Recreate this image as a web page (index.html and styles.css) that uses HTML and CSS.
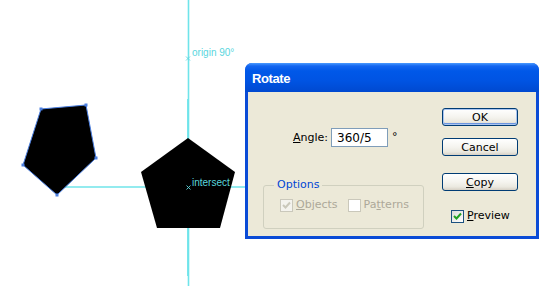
FILE: index.html
```html
<!DOCTYPE html>
<html lang="en">
<head>
  <meta charset="UTF-8">
  <meta name="viewport" content="width=device-width, initial-scale=1.0">
  <title>Rotate</title>
  <link rel="stylesheet" href="styles.css">
</head>
<body>

  <!-- artboard: guides and the two pentagons -->
  <svg class="artboard" width="556" height="286" viewBox="0 0 556 286">
    <line class="guide" x1="188.5" y1="0" x2="188.5" y2="286" stroke-width="1.6"/>
    <line class="guide" x1="187.6" y1="99" x2="187.6" y2="276" stroke-width="1"/>
    <line class="guide" x1="54" y1="187" x2="250" y2="187" stroke-width="1.4"/>

    <polygon class="shape" points="188,138 235,172 220,228 157,228 141,172"/>

    <polygon class="shape selected" points="41,109 86,105 96,158 57,195 23,165"/>
    <rect class="handle" x="39.5" y="107.5" width="3" height="3"/>
    <rect class="handle" x="84.5" y="103.5" width="3" height="3"/>
    <rect class="handle" x="94.5" y="156.5" width="3" height="3"/>
    <rect class="handle" x="55.5" y="193.5" width="3" height="3"/>
    <rect class="handle" x="21.5" y="163.5" width="3" height="3"/>

    <path class="marker" d="M186 56.5 L190 60.5 M190 56.5 L186 60.5"/>
    <text class="smart" x="192" y="56">origin 90°</text>
    <path class="marker" d="M186.5 185.5 L190.5 189.5 M190.5 185.5 L186.5 189.5"/>
    <text class="smart" x="192" y="186">intersect</text>
  </svg>

  <div class="dialog">
    <div class="titlebar"><span class="title">Rotate</span></div>
    <div class="dialog-body">
      <div class="left-col">
        <div class="angle-row">
          <label for="angle"><u>A</u>ngle:</label>
          <input type="text" id="angle" value="360/5">
          <span class="deg">°</span>
        </div>

        <fieldset class="options">
          <legend>Options</legend>
          <div class="check-row">
            <span class="check disabled">
              <span class="box checked">
                <svg width="9" height="9" viewBox="0 0 9 9"><path d="M1 4 L3.5 6.5 L8 1.5" /></svg>
              </span>
              <span><u>O</u>bjects</span>
            </span>
            <span class="check disabled">
              <span class="box"></span>
              <span>Pa<u>t</u>terns</span>
            </span>
          </div>
        </fieldset>
      </div>

      <div class="right-col">
        <button class="btn default">OK</button>
        <button class="btn cancel">Cancel</button>
        <button class="btn copy"><u>C</u>opy</button>
        <span class="check preview">
          <span class="box checked">
            <svg width="9" height="9" viewBox="0 0 9 9"><path d="M1 4 L3.5 6.5 L8 1.5" /></svg>
          </span>
          <span><u>P</u>review</span>
        </span>
      </div>
    </div>
  </div>

</body>
</html>
```

FILE: styles.css
```css
/* page = illustrator artboard */
body {
  margin: 0;
  width: 556px;
  height: 286px;
  position: relative;
  overflow: hidden;
  background: #fff;
  font-family: "DejaVu Sans", "Liberation Sans", sans-serif;
  font-size: 11px;
  color: #000;
}
.artboard {
  position: absolute;
  left: 0;
  top: 0;
}
.guide {
  stroke: #6fe4ea;
}
.shape {
  fill: #000;
}
.shape.selected {
  stroke: #4b7fe0;
  stroke-width: 1;
}
.handle {
  fill: #4b7fe0;
}
.marker {
  stroke: #5fd6de;
  stroke-width: 0.9;
  fill: none;
}
.smart {
  font-family: "Liberation Sans", Arial, sans-serif;
  font-size: 10px;
  fill: #5ad6de;
}

/* XP style dialog window */
.dialog {
  position: absolute;
  left: 245px;
  top: 63px;
  width: 294px;
  height: 176px;
  box-sizing: border-box;
  padding: 0 3px 3px;
  background: #0a4bd6;
  border-radius: 7px 7px 0 0;
  display: flex;
  flex-direction: column;
}
.titlebar {
  height: 29px;
  margin: 0 -3px;
  padding-left: 7px;
  display: flex;
  align-items: center;
  padding-top: 2px;
  box-sizing: border-box;
  border-radius: 7px 7px 0 0;
  background: linear-gradient(#4a9bff 0, #1466f0 3px, #0058e8 8px, #0054e3 60%, #0049d0 100%);
}
.title {
  font-family: "Liberation Sans", Arial, sans-serif;
  font-weight: bold;
  font-size: 13px;
  letter-spacing: -0.4px;
  color: #fff;
}
.dialog-body {
  flex: 1;
  background: #ece9d8;
  display: flex;
  padding: 16px 0 0 15px;
}

.left-col {
  width: 161px;
  display: flex;
  flex-direction: column;
}
.angle-row {
  display: flex;
  align-items: center;
  margin-top: 20px;
  padding-left: 30px;
  height: 19px;
}
.angle-row label {
  margin-right: 3px;
}
.angle-row input {
  width: 57px;
  height: 19px;
  box-sizing: border-box;
  border: 1px solid #7f9db9;
  padding: 0 0 0 5px;
  font-family: "DejaVu Sans", sans-serif;
  font-size: 12px;
  background: #fff;
  outline: none;
}
.deg {
  align-self: flex-start;
  margin-left: 4px;
  margin-top: 2px;
  font-size: 11px;
}

.options {
  margin: 31px 0 0;
  padding: 6px 0 16px 16px;
  min-width: 0;
  border: 1px solid #d0d0bf;
  border-radius: 3px;
}
.options legend {
  margin-left: -6px;
  padding: 0 3px;
  line-height: 14px;
  color: #0046d5;
}
.check-row {
  display: flex;
  gap: 10px;
}
.check {
  display: flex;
  align-items: center;
  gap: 3px;
  line-height: 14px;
}
.box {
  width: 13px;
  height: 13px;
  box-sizing: border-box;
  border: 1px solid #1c5180;
  background: linear-gradient(135deg, #dcdcd7, #fff);
  display: flex;
  align-items: center;
  justify-content: center;
}
.box path {
  fill: none;
  stroke: #21a121;
  stroke-width: 2;
}
.check.disabled {
  color: #aca899;
}
.check.disabled .box {
  border-color: #cac8bb;
  background: #fff;
}
.check.disabled .box.checked {
  background: #f4f3ee;
}
.check.disabled .box path {
  stroke: #cac8bb;
}

.right-col {
  margin-left: 18px;
  display: flex;
  flex-direction: column;
  align-items: flex-start;
}
.btn {
  width: 76px;
  height: 18px;
  padding: 0;
  font-family: "DejaVu Sans", sans-serif;
  font-size: 11px;
  color: #000;
  border: 1px solid #003c74;
  border-radius: 3px;
  background: linear-gradient(#fff 0, #f5f4ef 50%, #ebe9e0 80%, #d6d0c5 100%);
}
.btn.default {
  box-shadow: inset 0 0 0 1px #a9c4f0, inset 0 -1px 0 1px #6b95e0;
}
.cancel {
  margin-top: 12px;
}
.copy {
  margin-top: 17px;
}
.preview {
  margin-top: 18px;
  margin-left: 9px;
}
```
